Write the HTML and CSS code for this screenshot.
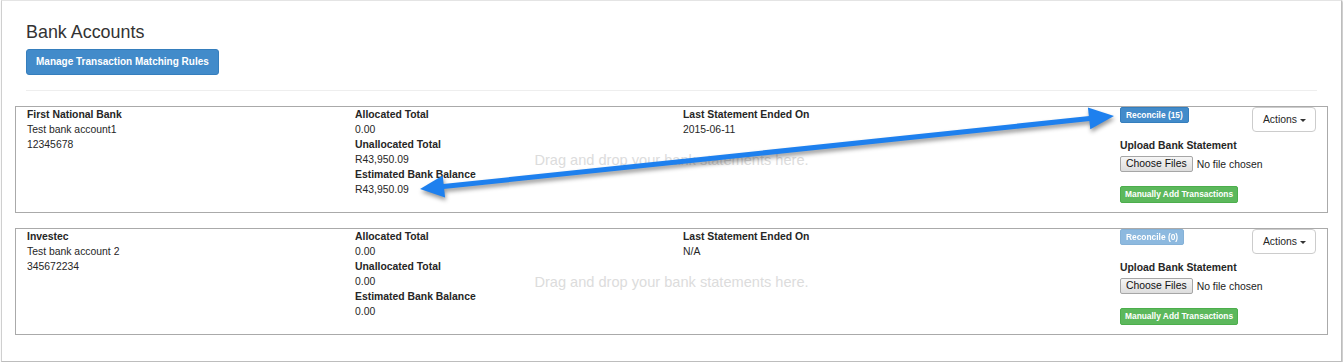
FILE: index.html
```html
<!DOCTYPE html>
<html>
<head>
<meta charset="utf-8">
<title>Bank Accounts</title>
<link rel="stylesheet" href="styles.css">
</head>
<body>
<div class="frame">
  <div class="page">
    <h3 class="title">Bank Accounts</h3>
    <button class="btn btn-primary btn-manage">Manage Transaction Matching Rules</button>
    <hr class="divider">

    <div class="account">
      <div class="col">
        <div class="label">First National Bank</div>
        <div>Test bank account1</div>
        <div>12345678</div>
      </div>
      <div class="col">
        <div class="label">Allocated Total</div>
        <div>0.00</div>
        <div class="label">Unallocated Total</div>
        <div>R43,950.09</div>
        <div class="label">Estimated Bank Balance</div>
        <div>R43,950.09</div>
      </div>
      <div class="col">
        <div class="label">Last Statement Ended On</div>
        <div>2015-06-11</div>
      </div>
      <div class="col-actions">
        <div class="top-row">
          <button class="btn btn-primary btn-xs">Reconcile (15)</button>
          <button class="btn btn-default btn-actions">Actions <span class="caret"></span></button>
        </div>
        <div class="label upload-label">Upload Bank Statement</div>
        <div class="file-row">
          <span class="file-btn">Choose Files</span>
          <span class="file-name">No file chosen</span>
        </div>
        <button class="btn btn-success btn-xs btn-add">Manually Add Transactions</button>
      </div>
      <div class="dropzone">Drag and drop your bank statements here.</div>
    </div>

    <div class="account">
      <div class="col">
        <div class="label">Investec</div>
        <div>Test bank account 2</div>
        <div>345672234</div>
      </div>
      <div class="col">
        <div class="label">Allocated Total</div>
        <div>0.00</div>
        <div class="label">Unallocated Total</div>
        <div>0.00</div>
        <div class="label">Estimated Bank Balance</div>
        <div>0.00</div>
      </div>
      <div class="col">
        <div class="label">Last Statement Ended On</div>
        <div>N/A</div>
      </div>
      <div class="col-actions">
        <div class="top-row">
          <button class="btn btn-primary btn-xs disabled">Reconcile (0)</button>
          <button class="btn btn-default btn-actions">Actions <span class="caret"></span></button>
        </div>
        <div class="label upload-label">Upload Bank Statement</div>
        <div class="file-row">
          <span class="file-btn">Choose Files</span>
          <span class="file-name">No file chosen</span>
        </div>
        <button class="btn btn-success btn-xs btn-add">Manually Add Transactions</button>
      </div>
      <div class="dropzone">Drag and drop your bank statements here.</div>
    </div>
  </div>

  <svg class="arrow" width="1343" height="364" viewBox="0 0 1343 364">
    <line x1="441" y1="186.8" x2="1092" y2="118.3" stroke="#1e80ee" stroke-width="5"/>
    <polygon points="420,189 445.1,197.6 442.7,175.6" fill="#1e80ee"/>
    <polygon points="1114,116 1090.3,129.2 1087.9,107.4" fill="#1e80ee"/>
  </svg>
</div>
</body>
</html>
```

FILE: styles.css
```css
* {
  box-sizing: border-box;
}

html, body {
  margin: 0;
  padding: 0;
  background: #ffffff;
}

body {
  font-family: "Liberation Sans", Arial, sans-serif;
  font-size: 10.4px;
  line-height: 15px;
  color: #262626;
}

.frame {
  position: relative;
  margin-left: 1px;
  width: 1341px;
  border: 1px solid #cfcfcf;
  border-top-color: #e4e4e4;
  border-right-color: #bdbdbd;
  border-bottom-color: #bdbdbd;
  box-shadow: 1px 1px 2px rgba(0, 0, 0, 0.28);
  background: #ffffff;
}

.page {
  padding: 21px 24px 26px 24px;
}

.title {
  margin: 0;
  font-size: 17.9px;
  line-height: 20px;
  font-weight: normal;
  color: #333333;
}

.btn {
  display: inline-block;
  font-family: "Liberation Sans", Arial, sans-serif;
  font-weight: bold;
  border: 1px solid transparent;
  border-radius: 3px;
  cursor: pointer;
  white-space: nowrap;
  margin: 0;
}

.btn-primary {
  background: #428bca;
  border-color: #357ebd;
  color: #ffffff;
}

.btn-success {
  background: #5cb85c;
  border-color: #4cae4c;
  color: #ffffff;
}

.btn-default {
  background: #ffffff;
  border-color: #cccccc;
  color: #262626;
  font-weight: normal;
}

.btn.disabled {
  opacity: 0.6;
}

.btn-manage {
  margin-top: 7px;
  font-size: 10px;
  line-height: 14px;
  padding: 5px 9px;
  display: block;
}

.divider {
  margin: 15px 0;
  border: 0;
  border-top: 1px solid #eeeeee;
  height: 0;
}

.account {
  position: relative;
  margin: 0 -11px 15px -11px;
  border: 1px solid #aaaaaa;
  display: grid;
  grid-template-columns: 328px 328px 1fr 196px;
  padding: 0 11px;
}

.account:last-child {
  margin-bottom: 0;
}

.label {
  font-weight: bold;
}

.col-actions {
  padding-bottom: 9px;
  display: flex;
  flex-direction: column;
  align-items: flex-start;
}

.top-row {
  width: 100%;
  height: 25px;
  display: flex;
  justify-content: space-between;
  align-items: flex-start;
}

.btn-xs {
  font-size: 8.4px;
  line-height: 12px;
  padding: 1px 5px;
  border-radius: 2px;
}

.btn-actions {
  font-size: 10.4px;
  line-height: 15px;
  padding: 4px 9px 4px 10px;
  border-radius: 4px;
  display: flex;
  align-items: center;
  gap: 3px;
}

.caret {
  display: inline-block;
  width: 0;
  height: 0;
  border-left: 3px solid transparent;
  border-right: 3px solid transparent;
  border-top: 3px solid #333333;
  margin-top: 1px;
}

.upload-label {
  margin-top: 6px;
}

.file-row {
  margin-top: 3px;
  display: flex;
  align-items: center;
  gap: 4px;
  height: 16px;
}

.file-btn {
  display: inline-block;
  height: 16px;
  line-height: 14px;
  padding: 0 5px;
  border: 1px solid #a6a6a6;
  border-radius: 2px;
  background: linear-gradient(#f6f6f6, #dddddd);
  color: #111111;
}

.file-name {
  color: #222222;
}

.btn-add {
  margin-top: 14px;
  line-height: 13px;
  padding: 1px 4px;
}

.dropzone {
  position: absolute;
  left: 0;
  right: 0;
  top: 50%;
  transform: translateY(-50%);
  text-align: center;
  font-size: 14.6px;
  line-height: 18px;
  color: #dcdcdc;
  pointer-events: none;
}

.arrow {
  position: absolute;
  left: -2px;
  top: -1px;
  pointer-events: none;
  overflow: visible;
  filter: drop-shadow(1px 3px 2px rgba(0, 0, 0, 0.4));
}
```
